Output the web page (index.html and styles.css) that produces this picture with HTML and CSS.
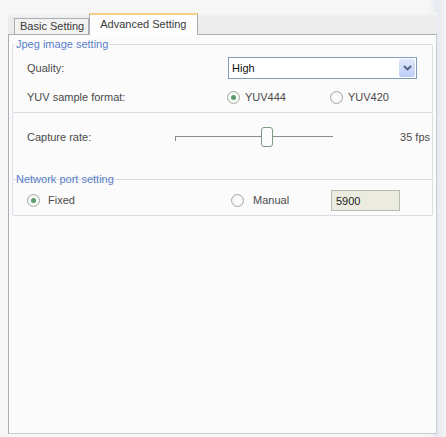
FILE: index.html
```html
<!DOCTYPE html>
<html lang="en">
<head>
    <meta charset="UTF-8">
    <title>Advanced Setting</title>
    <link rel="stylesheet" href="styles.css">
</head>
<body>
    <div class="window">
        <div class="tabs">
            <div class="tab">Basic Setting</div>
            <div class="tab active">Advanced Setting</div>
        </div>
        <div class="panel">
            <fieldset class="group first">
                <legend>Jpeg image setting</legend>
                <div class="row">
                    <span class="label">Quality:</span>
                    <div class="select">
                        <span>High</span>
                        <span class="drop">
                            <svg width="9" height="6" viewBox="0 0 9 6"><path d="M1 1l3.5 3.5L8 1" fill="none" stroke="#4d6185" stroke-width="1.8"/></svg>
                        </span>
                    </div>
                </div>
                <div class="row">
                    <span class="label">YUV sample format:</span>
                    <label class="radio on yuv444"><span class="dot"></span>YUV444</label>
                    <label class="radio"><span class="dot"></span>YUV420</label>
                </div>
            </fieldset>
            <fieldset class="group capture">
                <div class="row">
                    <span class="label short">Capture rate:</span>
                    <div class="slider">
                        <div class="track"></div>
                        <div class="thumb" style="left: 58%"></div>
                    </div>
                    <span class="fps">35 fps</span>
                </div>
            </fieldset>
            <fieldset class="group network">
                <legend>Network port setting</legend>
                <div class="row">
                    <label class="radio on fixed"><span class="dot"></span>Fixed</label>
                    <label class="radio manual"><span class="dot"></span>Manual</label>
                    <div class="port">5900</div>
                </div>
            </fieldset>
        </div>
    </div>
</body>
</html>
```

FILE: styles.css
```css
body {
    margin: 0;
    background: #f6f6f6;
    font-family: "Liberation Sans", Arial, sans-serif;
    font-size: 11px;
    color: #4a4a4a;
}
.window {
    padding: 12px 9px 4px 8px;
    background: linear-gradient(to right, #f6f6f6 96%, #e6eaf0 98%, #f2f3f6);
}
.tabs {
    display: flex;
    align-items: flex-end;
    height: 22px;
    padding-left: 6px;
    background: linear-gradient(#f7f7f7, #ececec 6px, #ececec);
}
.tab {
    height: 15px;
    line-height: 15px;
    padding: 0 4px 0 5px;
    border: 1px solid #a9afb5;
    border-bottom: none;
    background: #f2f2f0;
    color: #3a3a3a;
}
.tab.active {
    position: relative;
    height: 20px;
    line-height: 18px;
    margin-bottom: -1px;
    padding: 0 11px 0 10px;
    border-top: 2px solid #f3cf88;
    border-color: #f3cf88 #a9afb5 #a9afb5;
    background: #fdfdfd;
}
.panel {
    height: 396px;
    padding: 2px 3px 0 3px;
    border: 1px solid #a9afb5;
    border-right-color: #c6ccd2;
    border-bottom-color: #c8cbd0;
    background: #fbfbfb;
}
.group {
    margin: 0;
    padding: 0 0 4px 14px;
    min-inline-size: auto;
    border: 1px solid #dadfe3;
    border-radius: 2px;
}
.group legend {
    padding: 0 1px;
    margin-left: -12px;
    line-height: 14px;
    color: #5a7fc8;
}
.first {
    padding-top: 6px;
    padding-bottom: 4px;
}
.capture {
    margin-top: -1px;
    padding-top: 13px;
    padding-bottom: 31px;
}
.network {
    margin-top: -8px;
    padding-top: 3px;
    padding-left: 14px;
}
.row {
    display: flex;
    align-items: center;
    height: 22px;
}
.first .row + .row {
    margin-top: 7px;
}
.label {
    width: 201px;
    flex: none;
}
.select {
    display: flex;
    align-items: center;
    justify-content: space-between;
    padding-left: 3px;
    box-sizing: border-box;
    width: 189px;
    height: 22px;
    border: 1px solid #7f9db9;
    background: #fff;
    color: #111;
}
.drop {
    display: flex;
    align-items: center;
    justify-content: center;
    width: 16px;
    height: 18px;
    margin-right: 1px;
    border-radius: 2px;
    background: linear-gradient(#dfe8fb, #bccdf6);
}
.radio {
    display: flex;
    align-items: center;
    gap: 5px;
    width: 106px;
}
.yuv444 {
    margin-left: -1px;
    width: 107px;
}
.dot {
    width: 11px;
    height: 11px;
    border: 1px solid #a2aaa2;
    border-radius: 50%;
    background: radial-gradient(#ffffff, #eef0ec);
    display: flex;
    align-items: center;
    justify-content: center;
}
.radio.on .dot::after {
    content: "";
    width: 5px;
    height: 5px;
    border-radius: 50%;
    background: #5d9a6a;
}
.fixed {
    width: 204px;
    gap: 8px;
}
.manual {
    width: 100px;
    gap: 9px;
}
.port {
    width: 69px;
    height: 21px;
    line-height: 21px;
    padding-left: 4px;
    box-sizing: border-box;
    border: 1px solid #b8bab0;
    background: #ecebe0;
    color: #222;
}
.short {
    width: 148px;
}
.slider {
    position: relative;
    width: 158px;
    height: 22px;
}
.track {
    position: absolute;
    left: 0;
    right: 0;
    top: 10px;
    height: 4px;
    border-top: 1px solid #8c8c8c;
    border-left: 1px solid #8c8c8c;
}
.thumb {
    position: absolute;
    top: 1px;
    width: 10px;
    height: 18px;
    margin-left: -6px;
    border: 1px solid #7f9a82;
    border-radius: 3px;
    background: #fcfcfc;
}
.fps {
    margin-left: auto;
    margin-right: 2px;
}
```
